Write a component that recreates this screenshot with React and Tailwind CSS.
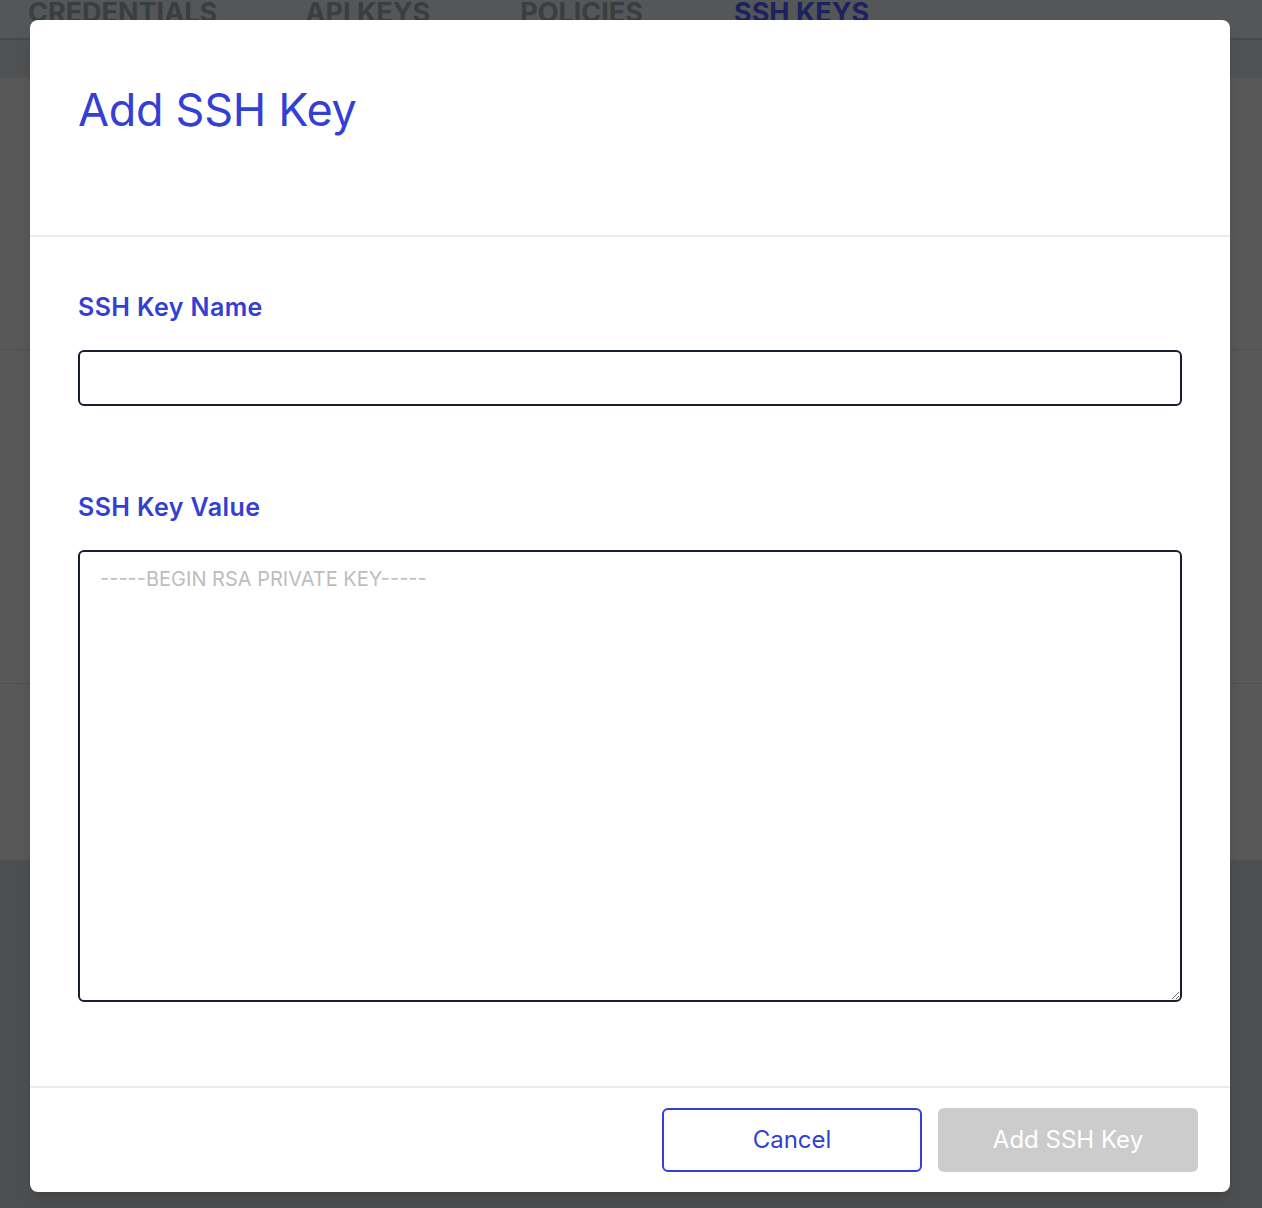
import React from 'react';

const font = { fontFamily: 'Inter, "Open Sans", sans-serif' };

function BackgroundPage() {
  return (
    <div className="absolute inset-0 flex flex-col bg-[#4d4e50]">
      {/* tabs, partially scrolled off */}
      <div className="h-[38px] bg-[#555657] overflow-hidden relative">
        <div className="flex items-end h-full -mt-[12px] text-[27px] font-bold uppercase text-[#393e40] leading-none">
          <span className="ml-[28px]">Credentials</span>
          <span className="ml-[88px]">API Keys</span>
          <span className="ml-[90px]">Policies</span>
          <span className="ml-[91px] text-[#1c2260]">SSH Keys</span>
        </div>
      </div>
      <div className="h-[2px] bg-[#45494b]" />
      <div className="h-[38px] bg-[#505152]" />
      <div className="h-[272px] bg-[#585858] border-b border-[#4e4e4e]" />
      <div className="h-[334px] bg-[#585858] border-b border-[#4e4e4e]" />
      <div className="h-[176px] bg-[#585858]" />
      <div className="flex-1 bg-[#4d4e50]" />
    </div>
  );
}

export default function App() {
  return (
    <div className="relative w-full h-[1208px] overflow-hidden" style={font}>
      <BackgroundPage />

      {/* Modal */}
      <div className="absolute left-[30px] right-[32px] top-[20px] h-[1172px] bg-white rounded-lg flex flex-col shadow-lg">
        <div className="h-[217px] border-b-2 border-[#ececec] px-12 pt-[62px]">
          <h1 className="text-[45px] leading-tight text-[#3340d4] font-normal tracking-[-0.3px]">Add SSH Key</h1>
        </div>

        <div className="flex-1 px-12 pt-[58px] flex flex-col">
          <label className="text-[25px] font-semibold text-[#3340d4] leading-none tracking-[0.4px]">SSH Key Name</label>
          <input type="text" className="mt-[30px] h-[56px] w-full rounded-md border-2 border-[#18202e] outline-none px-5 text-[20px]" />

          <label className="mt-[89px] text-[25px] font-semibold text-[#3340d4] leading-none tracking-[0.4px]">SSH Key Value</label>
          <textarea
            placeholder="-----BEGIN RSA PRIVATE KEY-----"
            className="mt-[30px] h-[452px] w-full rounded-md border-2 border-[#18202e] outline-none px-5 py-3 text-[20px] placeholder:text-[#bdbdbd] resize-y"
          />
        </div>

        <div className="h-[106px] border-t-2 border-[#ececec] flex items-center justify-end gap-4 pr-8">
          <button className="w-[260px] h-[64px] rounded-md border-2 border-[#3340d4] bg-white text-[24px] text-[#3340d4]">Cancel</button>
          <button className="w-[260px] h-[64px] rounded-md bg-[#cccccc] text-[24px] text-white">Add SSH Key</button>
        </div>
      </div>
    </div>
  );
}
